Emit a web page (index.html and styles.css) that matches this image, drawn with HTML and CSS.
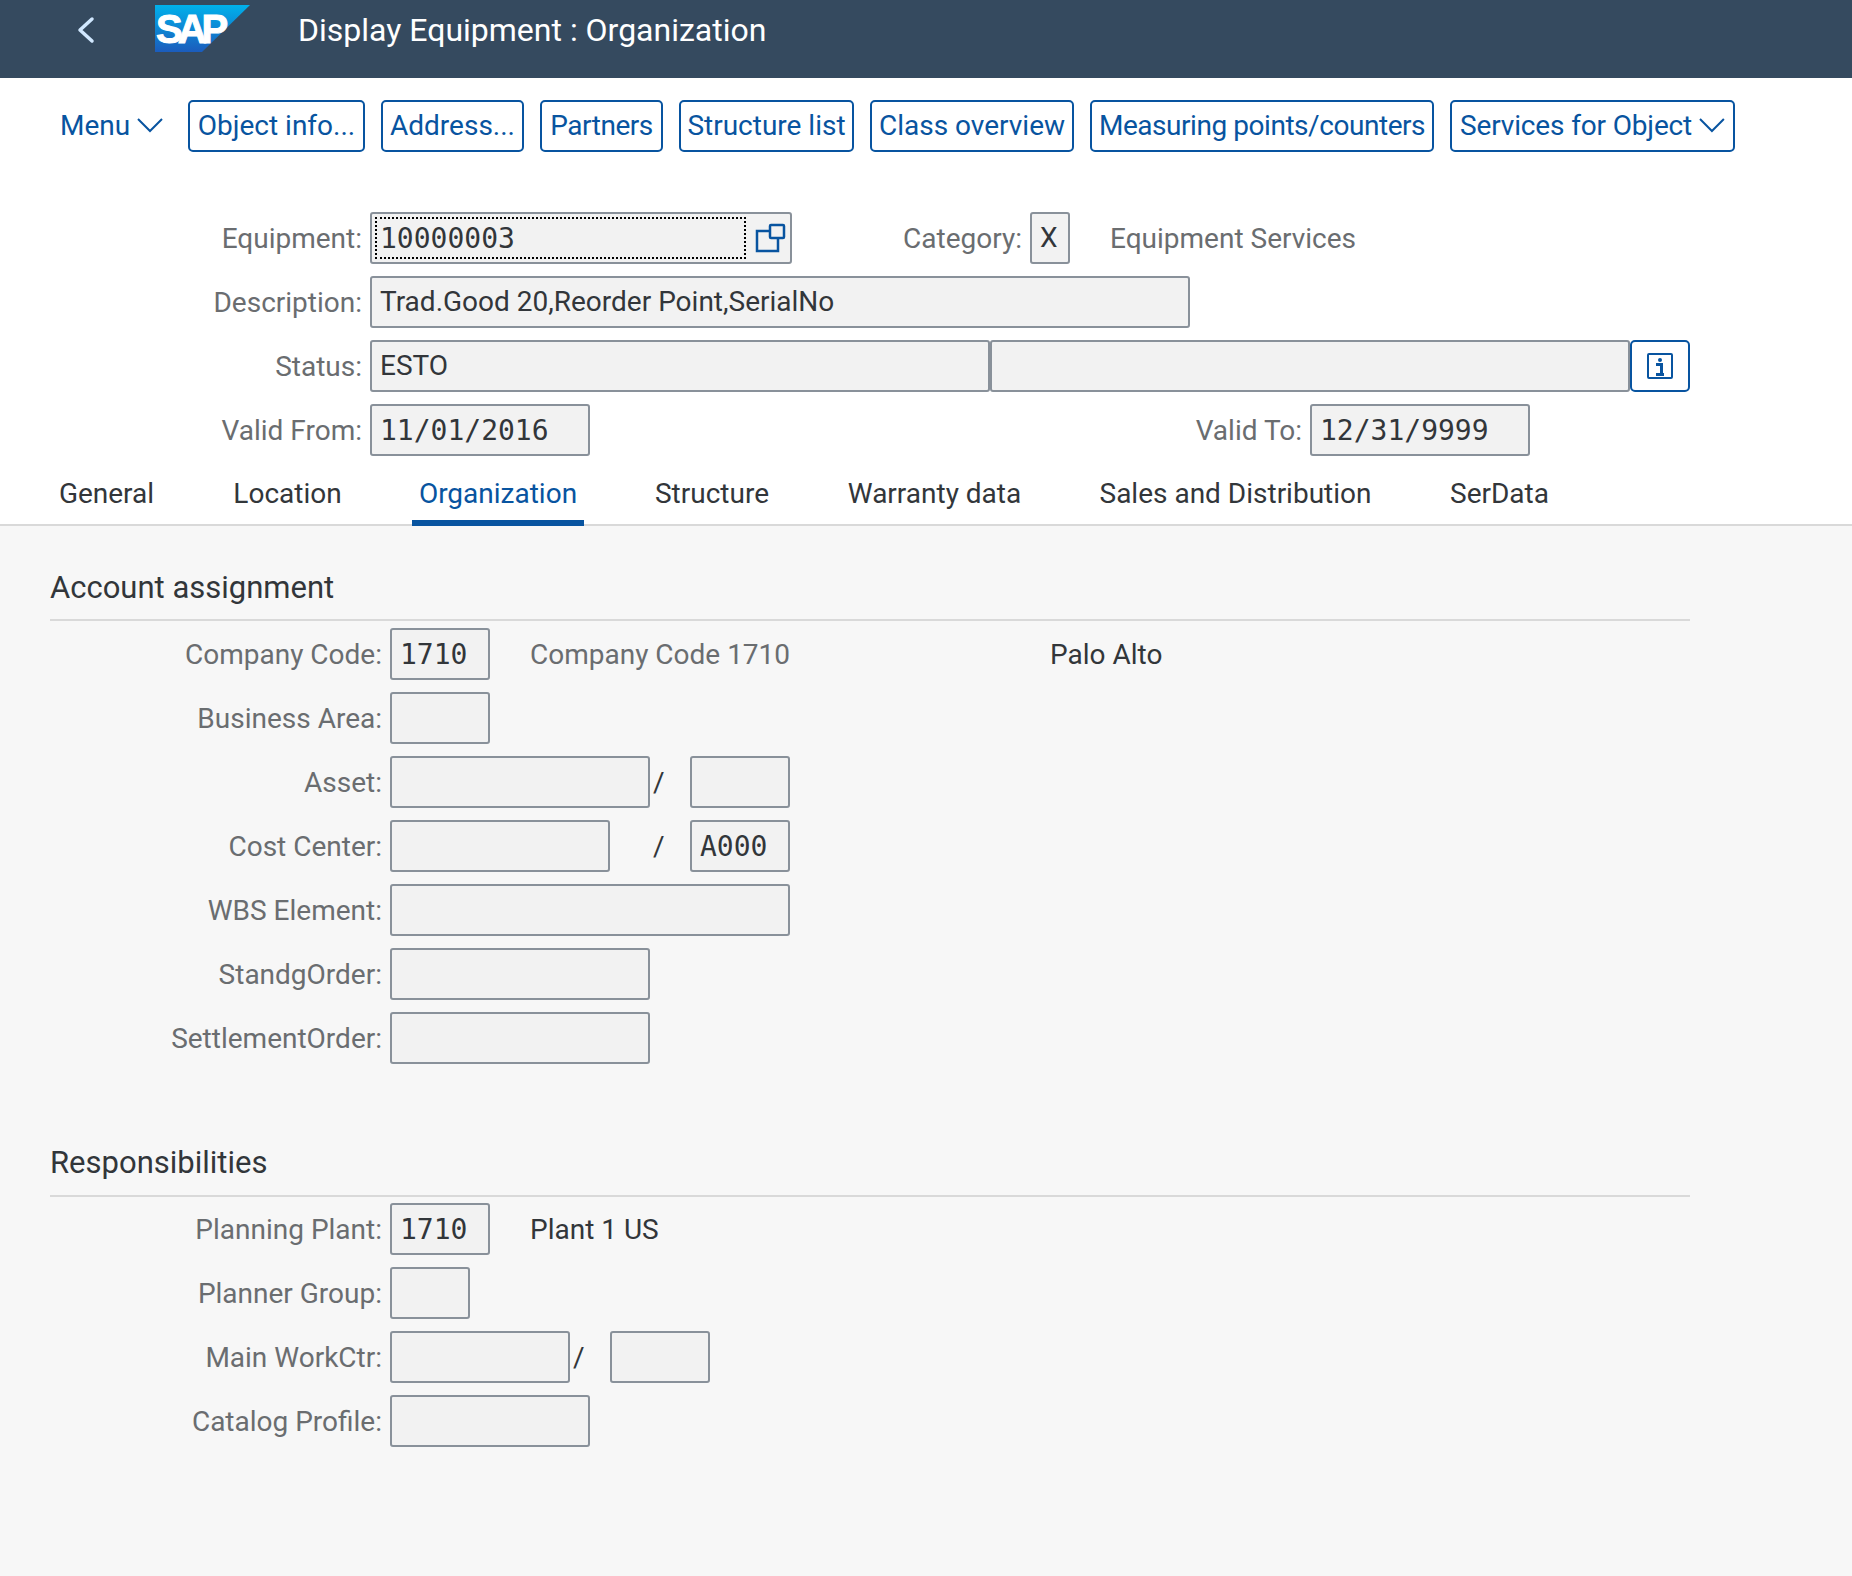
FILE: index.html
```html
<!DOCTYPE html>
<html lang="en">
<head>
  <meta charset="UTF-8">
  <title>Display Equipment : Organization</title>
  <link rel="stylesheet" href="styles.css">
</head>
<body>
  <header class="shell">
    <svg class="back" viewBox="0 0 20 28"><path d="M16 3 4 14l12 11" /></svg>
    <div class="logo">
      <svg class="logo-bg" viewBox="0 0 95 47"><defs><linearGradient id="sap" x1="0" y1="0" x2="0" y2="1"><stop offset="0" stop-color="#00b1eb"/><stop offset="1" stop-color="#1b5cbc"/></linearGradient></defs><path d="M0 0h95L47 47H0z" fill="url(#sap)"/></svg>
      <span class="logo-text">SAP</span>
    </div>
    <div class="shell-title">Display Equipment : Organization</div>
  </header>

  <nav class="toolbar">
    <a class="menu">Menu <svg class="chev" viewBox="0 0 26 16"><path d="M1 2l12 12L25 2" /></svg></a>
    <a class="btn">Object info...</a>
    <a class="btn">Address...</a>
    <a class="btn tight">Partners</a>
    <a class="btn">Structure list</a>
    <a class="btn">Class overview</a>
    <a class="btn tight">Measuring points/counters</a>
    <a class="btn split">Services for Object <svg class="chev" viewBox="0 0 26 16"><path d="M1 2l12 12L25 2" /></svg></a>
  </nav>

  <section class="head">
    <div class="row">
      <label class="lab">Equipment:</label>
      <div class="inp mono w-422 focus"><span class="dots">10000003</span>
        <svg class="copy" viewBox="0 0 32 32"><path d="M15 9H2v20h21V16.500" /><rect x="15" y="3" width="14" height="13" rx="1"/></svg>
      </div>
      <label class="lab cat">Category:</label>
      <div class="inp w-40">X</div>
      <span class="txt ml-40">Equipment Services</span>
    </div>
    <div class="row">
      <label class="lab">Description:</label>
      <div class="inp w-820">Trad.Good 20,Reorder Point,SerialNo</div>
    </div>
    <div class="row">
      <label class="lab">Status:</label>
      <div class="inp w-620">ESTO</div>
      <div class="inp w-640"></div>
      <a class="info">
        <svg viewBox="0 0 28 28"><rect x="2" y="2" width="24" height="24" rx="1"/><circle class="dot" cx="14" cy="8" r="2"/><path class="stem" d="M10 12.500h5.500V22M10 22.500h8" /></svg>
      </a>
    </div>
    <div class="row">
      <label class="lab">Valid From:</label>
      <div class="inp mono w-220">11/01/2016</div>
      <label class="lab valid-to">Valid To:</label>
      <div class="inp mono w-220">12/31/9999</div>
    </div>
  </section>

  <div class="tabs">
    <a class="tab">General</a>
    <a class="tab">Location</a>
    <a class="tab active">Organization</a>
    <a class="tab">Structure</a>
    <a class="tab">Warranty data</a>
    <a class="tab">Sales and Distribution</a>
    <a class="tab">SerData</a>
  </div>

  <main class="content">
    <section class="group">
      <h2 class="group-title">Account assignment</h2>
      <div class="row">
        <label class="lab">Company Code:</label>
        <div class="inp mono w-100">1710</div>
        <span class="txt ml-40 w-520">Company Code 1710</span>
        <span class="txt dark">Palo Alto</span>
      </div>
      <div class="row">
        <label class="lab">Business Area:</label>
        <div class="inp w-100"></div>
      </div>
      <div class="row">
        <label class="lab">Asset:</label>
        <div class="inp w-260"></div>
        <span class="slash w-40">/</span>
        <div class="inp mono w-100"></div>
      </div>
      <div class="row">
        <label class="lab">Cost Center:</label>
        <div class="inp w-220"></div>
        <span class="slash w-80 ind-40">/</span>
        <div class="inp mono w-100">A000</div>
      </div>
      <div class="row">
        <label class="lab">WBS Element:</label>
        <div class="inp w-400"></div>
      </div>
      <div class="row">
        <label class="lab">StandgOrder:</label>
        <div class="inp w-260"></div>
      </div>
      <div class="row">
        <label class="lab">SettlementOrder:</label>
        <div class="inp w-260"></div>
      </div>
    </section>

    <section class="group">
      <h2 class="group-title">Responsibilities</h2>
      <div class="row">
        <label class="lab">Planning Plant:</label>
        <div class="inp mono w-100">1710</div>
        <span class="txt dark ml-40">Plant 1 US</span>
      </div>
      <div class="row">
        <label class="lab">Planner Group:</label>
        <div class="inp w-80"></div>
      </div>
      <div class="row">
        <label class="lab">Main WorkCtr:</label>
        <div class="inp w-180"></div>
        <span class="slash w-40">/</span>
        <div class="inp w-100"></div>
      </div>
      <div class="row">
        <label class="lab">Catalog Profile:</label>
        <div class="inp w-200"></div>
      </div>
    </section>
  </main>
</body>
</html>
```
FILE: styles.css
```css
* {
  margin: 0;
  padding: 0;
  box-sizing: border-box;
}

:root {
  --blue: #0854a0;
  --text: #32363a;
  --label: #6a6d70;
}

html, body {
  height: 100%;
}

body {
  display: flex;
  flex-direction: column;
  min-height: 1576px;
  font-family: Roboto, sans-serif;
  font-size: 28px;
  color: var(--text);
  background: #fff;
}

/* shell bar */
.shell {
  display: flex;
  align-items: flex-start;
  height: 78px;
  background: #354a5f;
}

.back {
  width: 20px;
  height: 28px;
  margin: 16px 0 0 76px;
  fill: none;
  stroke: #d1e8ff;
  stroke-width: 3.5;
  stroke-linecap: round;
  stroke-linejoin: round;
}

.logo {
  position: relative;
  width: 95px;
  height: 47px;
  margin: 5px 0 0 59px;
}

.logo-bg {
  display: block;
  width: 95px;
  height: 47px;
}

.logo-text {
  position: absolute;
  left: 1px;
  top: 1px;
  font-family: "Liberation Sans", sans-serif;
  font-weight: 700;
  font-size: 40px;
  line-height: 47px;
  letter-spacing: -5px;
  color: #fff;
  -webkit-text-stroke: 1px #fff;
}

.shell-title {
  margin: 9px 0 0 48px;
  font-size: 32px;
  line-height: 42px;
  color: #fff;
}

/* toolbar */
.toolbar {
  display: grid;
  grid-template-columns: 112px 177px 143px 123px 175px 204px 344px 285px;
  gap: 16px;
  padding: 22px 0 0 60px;
  color: var(--blue);
}

.menu {
  display: flex;
  align-items: center;
  height: 52px;
  padding-bottom: 2px;
}

.btn {
  display: flex;
  align-items: center;
  justify-content: center;
  height: 52px;
  padding-bottom: 2px;
  border: 2px solid var(--blue);
  border-radius: 5px;
  white-space: nowrap;
}

.btn.tight {
  letter-spacing: -0.45px;
}

.btn.split {
  justify-content: space-between;
  padding: 0 8px 2px;
  letter-spacing: -0.15px;
}

.chev {
  width: 26px;
  height: 16px;
  margin-left: 7px;
  fill: none;
  stroke: var(--blue);
  stroke-width: 2;
}

/* header form */
.head {
  padding-top: 60px;
}

.row {
  display: flex;
  align-items: center;
  height: 52px;
  margin-bottom: 12px;
  white-space: nowrap;
}

.lab {
  flex: none;
  width: 362px;
  margin-right: 8px;
  text-align: right;
  color: var(--label);
}

.inp {
  flex: none;
  display: flex;
  align-items: center;
  position: relative;
  height: 52px;
  padding: 0 0 2px 8px;
  background: #f2f2f2;
  border: 2px solid #89919a;
  border-radius: 3px;
}

.mono {
  padding-bottom: 0;
  font-family: "DejaVu Sans Mono", monospace;
}

.focus .dots {
  display: flex;
  align-items: center;
  position: absolute;
  left: 3px;
  top: 3px;
  width: 371px;
  height: 42px;
  padding-left: 3px;
  border: 2px dotted #000;
}

.copy {
  position: absolute;
  right: 3px;
  top: 8px;
  width: 32px;
  height: 32px;
  fill: none;
  stroke: var(--blue);
  stroke-width: 2.500;
}

.info {
  display: flex;
  align-items: center;
  justify-content: center;
  width: 60px;
  height: 52px;
  border: 2px solid var(--blue);
  border-radius: 5px;
}

.info svg {
  width: 28px;
  height: 28px;
  fill: none;
  stroke: var(--blue);
  stroke-width: 2;
}

.info .dot {
  fill: var(--blue);
  stroke: none;
}

.info .stem {
  stroke-width: 3;
}

.lab.cat {
  width: 230px;
}

.lab.valid-to {
  width: 712px;
}

.txt {
  color: var(--label);
}

.txt.dark {
  color: var(--text);
}

.slash {
  flex: none;
  padding-left: 3px;
}

.slash.ind-40 {
  padding-left: 43px;
}

.w-40 { width: 40px; }
.w-80 { width: 80px; }
.w-100 { width: 100px; }
.w-180 { width: 180px; }
.w-200 { width: 200px; }
.w-220 { width: 220px; }
.w-260 { width: 260px; }
.w-400 { width: 400px; }
.w-422 { width: 422px; }
.w-520 { width: 520px; }
.w-620 { width: 620px; }
.w-640 { width: 640px; }
.w-820 { width: 820px; }
.ml-40 { margin-left: 40px; }

/* tabs */
.tabs {
  display: grid;
  grid-template-columns: 113px 121px 172px 128px 189px 285px 115px;
  gap: 64px;
  height: 58px;
  padding-left: 50px;
  border-bottom: 2px solid #d9d9d9;
}

.tab {
  height: 58px;
  line-height: 52px;
  text-align: center;
  white-space: nowrap;
}

.tab.active {
  color: var(--blue);
  border-bottom: 6px solid var(--blue);
}

/* tab content */
.content {
  flex: 1;
  padding: 0 162px 0 50px;
  background: #f7f7f7;
}

.content .lab {
  width: 332px;
}

.group {
  height: 575px;
}

.group + .group {
  height: auto;
}

.group-title {
  height: 95px;
  margin-bottom: 7px;
  padding-top: 40px;
  border-bottom: 2px solid #d9d9d9;
  font-size: 31px;
  font-weight: 400;
  line-height: 44px;
}

.group + .group .group-title {
  height: 96px;
  margin-bottom: 6px;
}
```
